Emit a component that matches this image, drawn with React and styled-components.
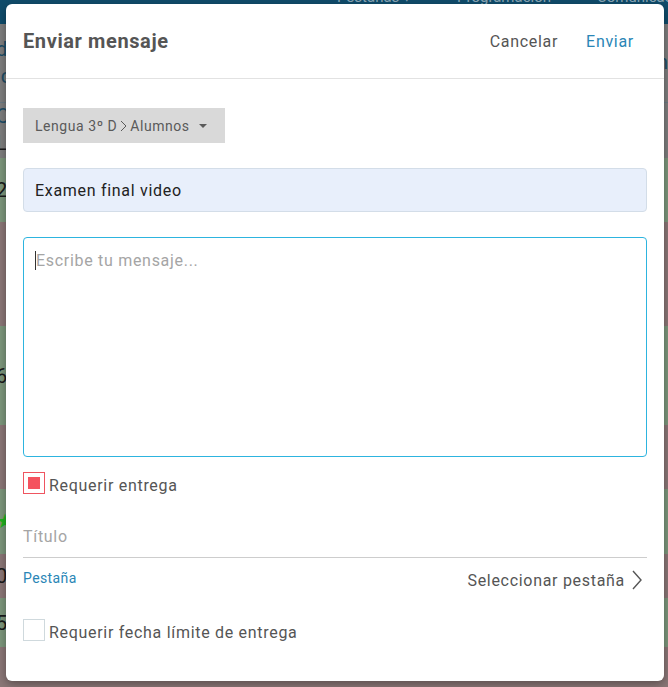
import React from "react";
import styled, { createGlobalStyle } from "styled-components";

const GlobalStyle = createGlobalStyle`
  html, body { margin: 0; padding: 0; }
  body {
    width: 668px;
    height: 687px;
    overflow: hidden;
    font-family: Roboto, "Liberation Sans", Arial, sans-serif;
  }
`;

// page behind the dialog, already dimmed by the overlay
const Screen = styled.div`
  position: relative;
  width: 668px;
  height: 687px;
  overflow: hidden;
  background: #8b7777;
`;

const Backdrop = styled.div`
  display: flex;
  flex-direction: column;
  height: 100%;
`;

const NavBar = styled.div`
  height: 24px;
  background: #104c6b;
  display: flex;
  align-items: flex-start;
  padding-left: 337px;
  gap: 46px;
  color: #8aa7b6;
  font-size: 15px;
  line-height: 18px;
  overflow: hidden;
  white-space: nowrap;
`;

const NavItem = styled.span`
  margin-top: -12px;
`;

const HeadBand = styled.div`
  height: ${(p) => p.h}px;
  background: #7e7e7e;
  border-bottom: ${(p) => (p.line ? "1px solid #6a7a84" : "none")};
  display: flex;
  justify-content: space-between;
  align-items: center;
  color: #1d4d66;
  font-size: 20px;
  line-height: 27px;
`;

const Row = styled.div`
  height: ${(p) => p.h}px;
  background: ${(p) => (p.green ? "#7d977c" : "#8b7777")};
  display: flex;
  justify-content: space-between;
  align-items: center;
  font-size: 20px;
  color: #1a1a1a;
`;

const EdgeGlyph = styled.span`
  margin-left: -4px;
  color: ${(p) => p.color || "#1a1a1a"};
`;

const Modal = styled.div`
  position: absolute;
  left: 6px;
  top: 4px;
  width: 658px;
  height: 677px;
  background: #fff;
  border-radius: 6px;
  box-shadow: 0 3px 10px rgba(0, 0, 0, 0.35);
  display: flex;
  flex-direction: column;
  letter-spacing: 0.7px;
`;

const Header = styled.div`
  height: 74px;
  border-bottom: 1px solid #e2e2e2;
  display: flex;
  align-items: center;
  padding: 0 30px 0 17px;
`;

const Title = styled.h1`
  margin: 0;
  flex: 1;
  font-size: 20px;
  font-weight: 700;
  letter-spacing: 0.6px;
  color: #555;
`;

const HeaderButton = styled.button`
  border: none;
  background: none;
  padding: 0;
  margin-left: 28px;
  font-family: inherit;
  letter-spacing: inherit;
  font-size: 16px;
  color: ${(p) => (p.primary ? "#2a86b6" : "#555")};
`;

const Body = styled.div`
  padding: 29px 17px 0 17px;
  display: flex;
  flex-direction: column;
`;

const Crumb = styled.div`
  align-self: flex-start;
  width: 202px;
  height: 35px;
  box-sizing: border-box;
  background: #d9d9d9;
  display: flex;
  align-items: center;
  padding-left: 12px;
  font-size: 14px;
  letter-spacing: 0.55px;
  color: #5a5a5a;
  gap: 2px;
`;

const Caret = styled.span`
  display: inline-block;
  width: 0;
  height: 0;
  margin-left: 7px;
  border-left: 4px solid transparent;
  border-right: 4px solid transparent;
  border-top: 4px solid #5a5a5a;
`;

const Subject = styled.div`
  margin-top: 25px;
  height: 44px;
  box-sizing: border-box;
  background: #e8effb;
  border: 1px solid #d3dde8;
  border-radius: 4px;
  display: flex;
  align-items: center;
  padding-left: 11px;
  font-size: 16px;
  color: #222;
`;

const Message = styled.div`
  margin-top: 25px;
  height: 220px;
  box-sizing: border-box;
  border: 1px solid #2db4df;
  border-radius: 4px;
  padding: 13px 11px;
  font-size: 16px;
  color: #a5a5a5;
  display: flex;
  align-items: flex-start;
`;

const Cursor = styled.span`
  display: inline-block;
  width: 1px;
  height: 19px;
  background: #333;
`;

const CheckRow = styled.label`
  display: flex;
  align-items: flex-start;
  gap: 4px;
  height: 22px;
  font-size: 16px;
  line-height: 28px;
  color: #555;
  margin-top: ${(p) => p.mt}px;
`;

const Box = styled.span`
  flex: none;
  width: 22px;
  height: 22px;
  box-sizing: border-box;
  border: 1px solid ${(p) => (p.checked ? "#ef5560" : "#cfd9dd")};
  display: flex;
  align-items: center;
  justify-content: center;
  &::after {
    content: "";
    display: ${(p) => (p.checked ? "block" : "none")};
    width: 12px;
    height: 12px;
    background: #f4535f;
  }
`;

const TitleField = styled.div`
  margin-top: 22px;
  height: 42px;
  box-sizing: border-box;
  border-bottom: 1px solid #cdcdcd;
  padding-top: 11px;
  font-size: 16px;
  color: #a5a5a5;
`;

const TabRow = styled.div`
  display: flex;
  justify-content: space-between;
  align-items: center;
  height: 44px;
`;

const TabLabel = styled.span`
  font-size: 14px;
  letter-spacing: 0.4px;
  color: #2a86b6;
  align-self: flex-start;
  margin-top: 12px;
`;

const TabPick = styled.span`
  display: flex;
  align-items: center;
  gap: 6px;
  font-size: 16px;
  color: #555;
  margin-right: 4px;
`;

export default function App() {
  return (
    <>
      <GlobalStyle />
      <Screen>
        <Backdrop>
          <NavBar>
            <NavItem>Pestañas ▾</NavItem>
            <NavItem>Programación</NavItem>
            <NavItem>Comunicación</NavItem>
          </NavBar>
          <HeadBand h={79} line>
            <EdgeGlyph color="#1d4d66">
              d
              <br />
              ic
            </EdgeGlyph>
            <EdgeGlyph color="#1d4d66">n</EdgeGlyph>
          </HeadBand>
          <HeadBand h={56}>
            <EdgeGlyph color="#1d4d66">
              C
              <br />
              <span style={{ color: "#1a1a1a" }}>L</span>
            </EdgeGlyph>
            <span />
          </HeadBand>
          <Row green h={65}>
            <EdgeGlyph>2</EdgeGlyph>
          </Row>
          <Row h={105} />
          <Row green h={100}>
            <EdgeGlyph>6</EdgeGlyph>
          </Row>
          <Row h={65} />
          <Row green h={65}>
            <EdgeGlyph color="#1fb21f">★</EdgeGlyph>
          </Row>
          <Row h={45}>
            <EdgeGlyph>0</EdgeGlyph>
          </Row>
          <Row green h={50}>
            <EdgeGlyph>5</EdgeGlyph>
          </Row>
          <Row h={40} />
        </Backdrop>

        <Modal>
          <Header>
            <Title>Enviar mensaje</Title>
            <HeaderButton>Cancelar</HeaderButton>
            <HeaderButton primary>Enviar</HeaderButton>
          </Header>
          <Body>
            <Crumb>
              Lengua 3º D
              <svg width="9" height="14" viewBox="0 0 9 14">
                <path d="M2 2l5 5-5 5" fill="none" stroke="#5a5a5a" strokeWidth="1" />
              </svg>
              Alumnos
              <Caret />
            </Crumb>
            <Subject>Examen final video</Subject>
            <Message>
              <Cursor />
              Escribe tu mensaje...
            </Message>
            <CheckRow mt={15}>
              <Box checked />
              <span>Requerir entrega</span>
            </CheckRow>
            <TitleField>Título</TitleField>
            <TabRow>
              <TabLabel>Pestaña</TabLabel>
              <TabPick>
                Seleccionar pestaña
                <svg width="12" height="22" viewBox="0 0 12 22">
                  <path d="M2 2l8 9-8 9" fill="none" stroke="#555" strokeWidth="1.4" />
                </svg>
              </TabPick>
            </TabRow>
            <CheckRow mt={17}>
              <Box />
              <span>Requerir fecha límite de entrega</span>
            </CheckRow>
          </Body>
        </Modal>
      </Screen>
    </>
  );
}
